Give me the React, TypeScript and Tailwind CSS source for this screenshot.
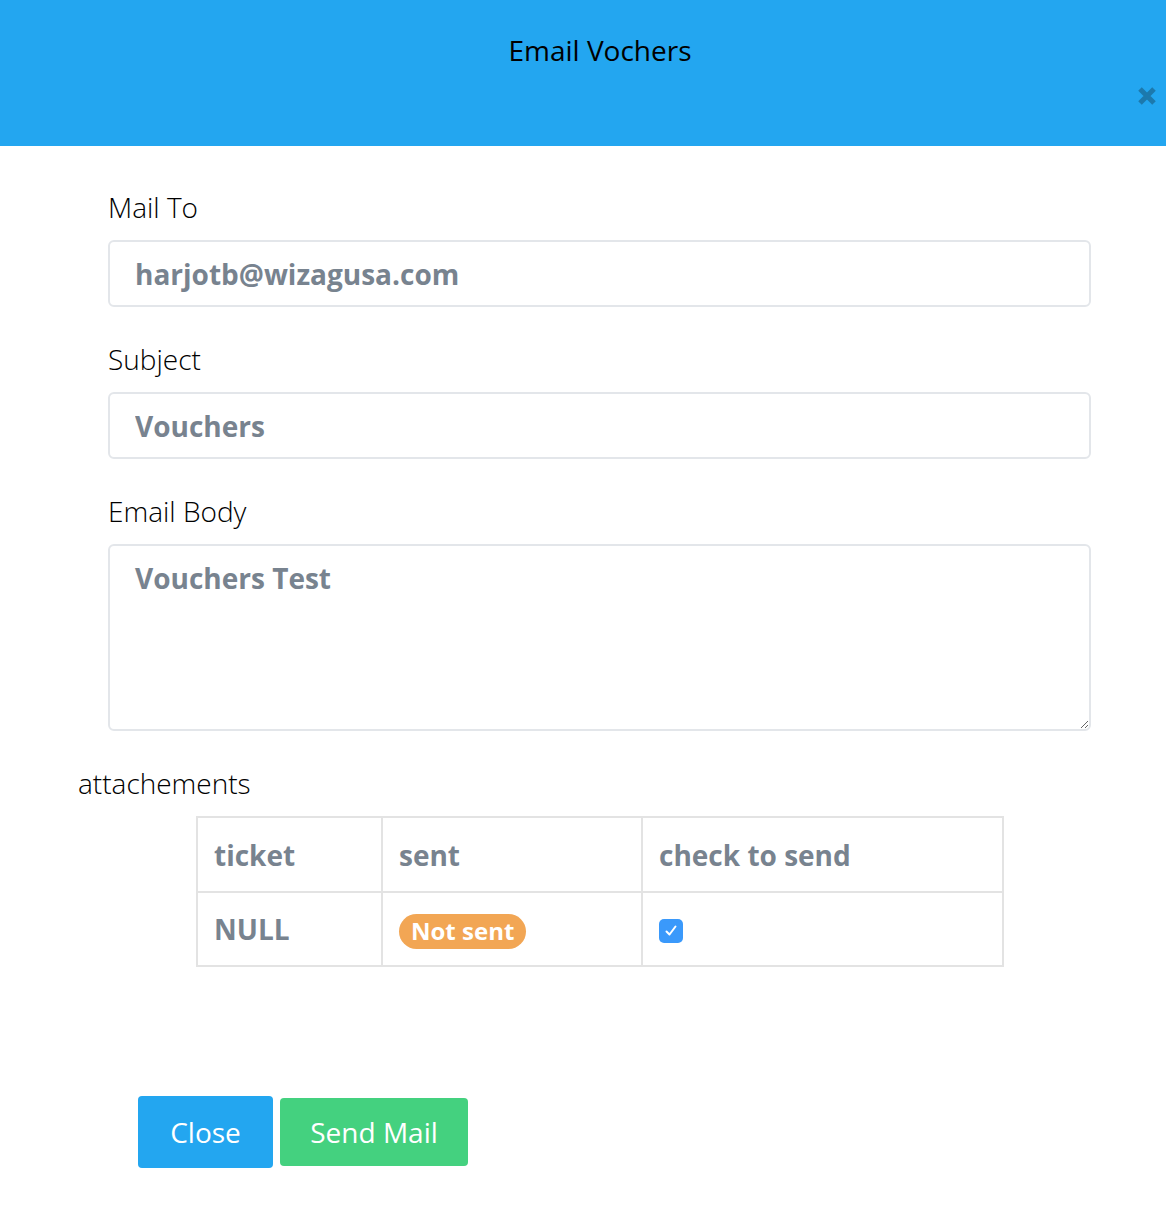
import React, { useState } from 'react';

function Field({ label, children }: { label: string; children: React.ReactNode }) {
  return (
    <div className="flex flex-col">
      <label className="text-[28px] font-light leading-[36px] text-black mb-[15px]">{label}</label>
      {children}
    </div>
  );
}

export default function App() {
  const [to, setTo] = useState('harjotb@wizagusa.com');
  const [subject, setSubject] = useState('Vouchers');
  const [body, setBody] = useState('Vouchers Test');
  const [checked, setChecked] = useState(true);

  return (
    <div className="w-[1166px] h-[1208px] bg-white" style={{ fontFamily: '"Open Sans", "Liberation Sans", sans-serif' }}>
      {/* Header */}
      <div className="relative h-[146px] bg-[#23a6f0]">
        <h1 className="pt-[30px] pl-[34px] text-center text-[28px] leading-[40px] text-black">Email Vochers</h1>
        <button className="absolute right-[7px] top-[84px] w-[24px] h-[24px] flex items-center justify-center text-[#1c79ad]">
          <svg width="22" height="22" viewBox="0 0 22 22">
            <path d="M4 4 L18 18 M18 4 L4 18" stroke="currentColor" strokeWidth="5" strokeLinecap="butt" />
          </svg>
        </button>
      </div>

      {/* Form */}
      <div className="pl-[108px] pt-[43px] flex flex-col gap-[34px] w-[1091px]">
        <Field label="Mail To">
          <input
            value={to}
            onChange={(e) => setTo(e.target.value)}
            className="h-[67px] border-2 border-[#e3e6ea] rounded-[6px] px-[25px] text-[28px] font-bold text-[#78838f] outline-none"
          />
        </Field>
        <Field label="Subject">
          <input
            value={subject}
            onChange={(e) => setSubject(e.target.value)}
            className="h-[67px] border-2 border-[#e3e6ea] rounded-[6px] px-[25px] text-[28px] font-bold text-[#78838f] outline-none"
          />
        </Field>
        <Field label="Email Body">
          <textarea
            value={body}
            onChange={(e) => setBody(e.target.value)}
            className="h-[187px] border-2 border-[#e3e6ea] rounded-[6px] px-[25px] py-[12px] text-[28px] leading-[40px] font-bold text-[#78838f] outline-none"
          />
        </Field>
      </div>

      {/* Attachments */}
      <div className="pl-[78px] pt-[33px]">
        <div className="text-[28px] font-light leading-[38px] text-black">attachements</div>
      </div>
      <div className="pl-[196px] pt-[14px]">
        <table className="w-[808px] border-collapse border-2 border-[#e3e3e3] text-[28px] font-bold text-[#78838f]">
          <thead>
            <tr className="h-[75px]">
              <th className="w-[185px] border-2 border-[#e3e3e3] px-[16px] text-left font-bold">ticket</th>
              <th className="w-[260px] border-2 border-[#e3e3e3] px-[16px] text-left font-bold">sent</th>
              <th className="border-2 border-[#e3e3e3] px-[16px] text-left font-bold">check to send</th>
            </tr>
          </thead>
          <tbody>
            <tr className="h-[74px]">
              <td className="border-2 border-[#e3e3e3] px-[16px]">NULL</td>
              <td className="border-2 border-[#e3e3e3] px-[16px]">
                <span className="inline-flex items-center h-[35px] px-[12px] rounded-full bg-[#f2a654] text-white text-[24px] leading-none">
                  Not sent
                </span>
              </td>
              <td className="border-2 border-[#e3e3e3] px-[16px]">
                <button
                  onClick={() => setChecked(!checked)}
                  className={`mt-[4px] w-[24px] h-[24px] rounded-[5px] flex items-center justify-center ${checked ? 'bg-[#3a99fb]' : 'border-2 border-[#c8c8c8] bg-white'}`}
                >
                  {checked && (
                    <svg width="16" height="16" viewBox="0 0 16 16">
                      <path d="M3.5 8.5 L6.5 11.5 L12.5 3.5" fill="none" stroke="white" strokeWidth="2" strokeLinecap="round" strokeLinejoin="round" />
                    </svg>
                  )}
                </button>
              </td>
            </tr>
          </tbody>
        </table>
      </div>

      {/* Footer buttons */}
      <div className="pl-[138px] pt-[129px] flex items-center gap-[7px]">
        <button className="w-[135px] h-[72px] rounded-[4px] bg-[#23a6f0] text-white text-[28px]">Close</button>
        <button className="w-[188px] h-[68px] rounded-[4px] bg-[#44d17f] text-white text-[28px]">Send Mail</button>
      </div>
    </div>
  );
}
